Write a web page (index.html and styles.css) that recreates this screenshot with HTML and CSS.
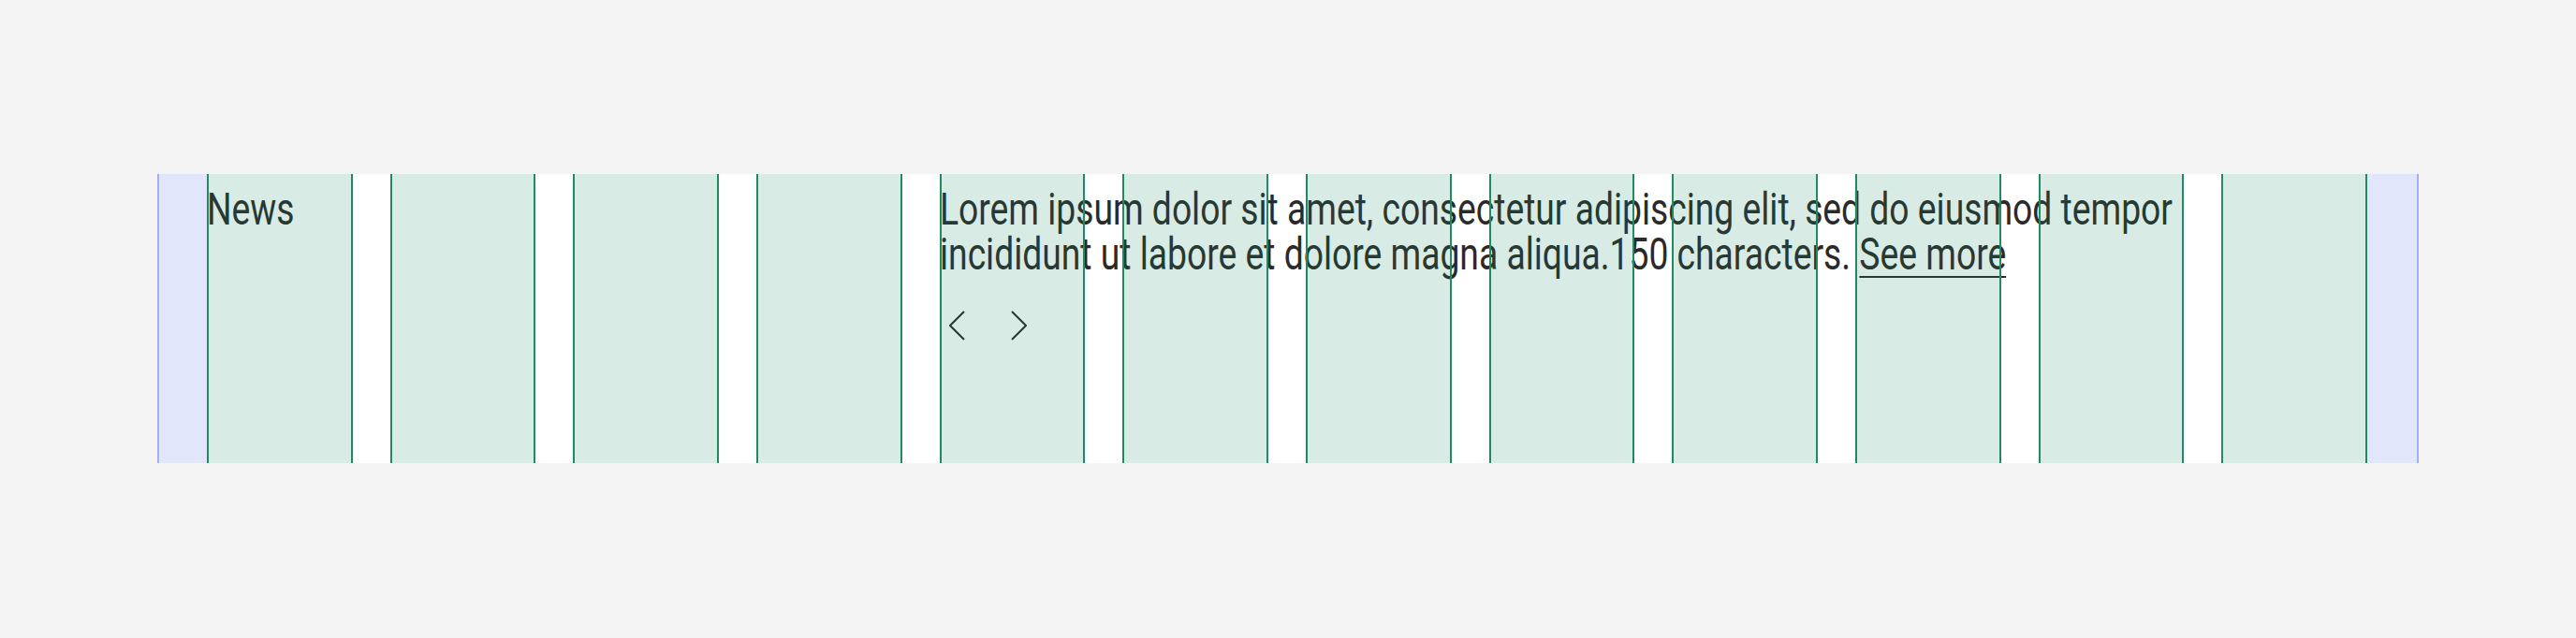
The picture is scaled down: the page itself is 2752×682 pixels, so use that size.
FILE: index.html
```html
<!DOCTYPE html>
<html lang="en">
<head>
  <meta charset="UTF-8" />
  <meta name="viewport" content="width=device-width, initial-scale=1.0" />
  <title>News</title>
  <link rel="stylesheet" href="styles.css">
</head>
<body>
  <section class="frame">
    <div class="content">
      <h2 class="label"><span class="squeeze">News</span></h2>
      <div class="teaser">
        <p class="teaser-text squeeze">Lorem ipsum dolor sit amet, consectetur adipiscing elit, sed do eiusmod tempor incididunt ut labore et dolore magna aliqua.150 characters. <a href="#" class="more">See more</a></p>
        <div class="pager">
          <button class="arrow" aria-label="Previous">
            <svg width="18" height="32" viewBox="0 0 18 32"><polyline points="16,1 1,16 16,31" /></svg>
          </button>
          <button class="arrow" aria-label="Next">
            <svg width="18" height="32" viewBox="0 0 18 32"><polyline points="2,1 17,16 2,31" /></svg>
          </button>
        </div>
      </div>
    </div>
    <div class="overlay" aria-hidden="true">
      <div class="margin left"></div>
      <div class="cols">
        <span class="col"></span><span class="col"></span><span class="col"></span><span class="col"></span>
        <span class="col"></span><span class="col"></span><span class="col"></span><span class="col"></span>
        <span class="col"></span><span class="col"></span><span class="col"></span><span class="col"></span>
      </div>
      <div class="margin right"></div>
    </div>
  </section>
</body>
</html>
```

FILE: styles.css
```css
body {
  margin: 0;
  background: #f4f4f4;
  font-family: Roboto, "Liberation Sans", sans-serif;
  color: #2a2a2a;
}
.frame {
  position: relative;
  width: 2416px;
  height: 309px;
  margin: 186px 0 0 168px;
  box-sizing: border-box;
  padding: 0 55px 0 53px;
  background: #fff;
}
.content {
  display: grid;
  grid-template-columns: repeat(12, 1fr);
  column-gap: 40px;
  height: 100%;
}
/* no condensed face installed: narrow the regular one */
.squeeze {
  display: block;
  width: calc(100% / 0.776);
  transform: scaleX(0.776);
  transform-origin: left top;
}
.label {
  grid-column: 1 / span 4;
  margin: 0;
  padding-top: 14px;
  font-size: 48px;
  font-weight: 400;
  line-height: 48px;
}
.teaser {
  grid-column: 5 / span 7;
  padding-top: 14px;
}
.teaser-text {
  margin: 0;
  font-size: 48px;
  font-weight: 400;
  line-height: 48px;
}
.more {
  color: inherit;
  text-decoration: underline;
  text-decoration-thickness: 2px;
  text-underline-offset: 7px;
}
.pager {
  display: flex;
  gap: 27px;
  margin-top: 36px;
}
.arrow {
  display: flex;
  padding: 0 10px;
  border: none;
  background: none;
  cursor: pointer;
}
.arrow polyline {
  fill: none;
  stroke: #2a2a2a;
  stroke-width: 2;
}
/* column overlay */
.overlay {
  position: absolute;
  inset: 0;
  display: flex;
  pointer-events: none;
}
.margin {
  background: rgba(100, 120, 230, 0.19);
}
.margin.left {
  width: 51px;
  border-left: 2px solid #a3b1f0;
}
.margin.right {
  width: 53px;
  border-right: 2px solid #a3b1f0;
}
.cols {
  flex: 1;
  display: grid;
  grid-template-columns: repeat(12, 1fr);
  column-gap: 40px;
}
.col {
  background: rgba(25, 135, 95, 0.165);
  border-left: 2px solid #208a60;
  border-right: 2px solid #208a60;
}
```
